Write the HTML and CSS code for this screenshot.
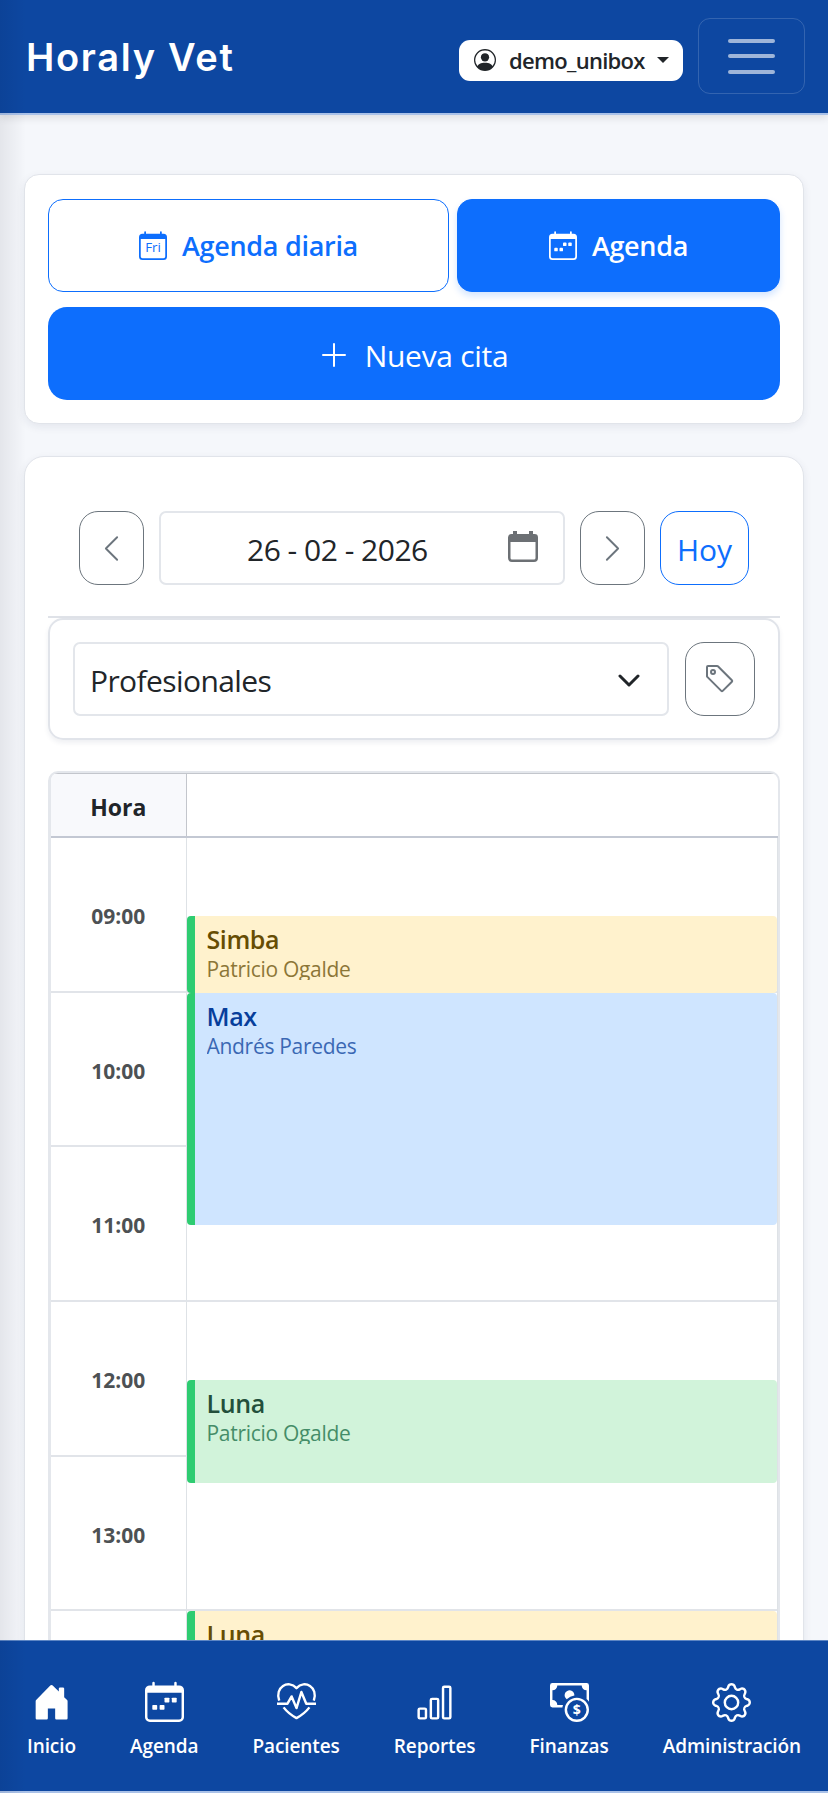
FILE: index.html
```html
<!DOCTYPE html>
<html lang="es">
<head>
    <meta charset="UTF-8">
    <meta name="viewport" content="width=device-width, initial-scale=1.0">
    <title>Horaly Vet - Agenda</title>
    <link rel="stylesheet" href="styles.css">
</head>
<body>
    <header class="navbar">
        <h1 class="brand">Horaly Vet</h1>
        <button class="user-btn">
            <svg class="icon-user" viewBox="0 0 16 16"><path d="M11 6a3 3 0 1 1-6 0 3 3 0 0 1 6 0"/><path fill-rule="evenodd" d="M0 8a8 8 0 1 1 16 0A8 8 0 0 1 0 8m8-7a7 7 0 0 0-5.468 11.37C3.242 11.226 4.805 10 8 10s4.757 1.225 5.468 2.37A7 7 0 0 0 8 1"/></svg>
            <span class="user-name">demo_unibox</span>
            <span class="caret"></span>
        </button>
        <button class="toggler" aria-label="Menú">
            <span></span>
            <span></span>
            <span></span>
        </button>
    </header>

    <main>
        <section class="card actions">
            <div class="tabs">
                <button class="btn tab tab-daily">
                    <svg class="icon-tab" viewBox="0 0 16 16"><path d="M4 0a.5.5 0 0 0-1 0v1H2a2 2 0 0 0-2 2v11a2 2 0 0 0 2 2h12a2 2 0 0 0 2-2V3a2 2 0 0 0-2-2h-1V0a.5.5 0 0 0-1 0v1H4zM1 4h14v10a1 1 0 0 1-1 1H2a1 1 0 0 1-1-1z"/><text class="icon-text" x="8" y="11.6" font-size="7.6">Fri</text></svg>
                    <span>Agenda diaria</span>
                </button>
                <button class="btn tab tab-active">
                    <svg class="icon-tab" viewBox="0 0 16 16"><path d="M4 0a.5.5 0 0 0-1 0v1H2a2 2 0 0 0-2 2v11a2 2 0 0 0 2 2h12a2 2 0 0 0 2-2V3a2 2 0 0 0-2-2h-1V0a.5.5 0 0 0-1 0v1H4zM1 4h14v10a1 1 0 0 1-1 1H2a1 1 0 0 1-1-1z"/><rect x="3" y="9" width="2" height="2" rx=".5"/><rect x="6" y="9" width="2" height="2" rx=".5"/><rect x="8" y="6" width="2" height="2" rx=".5"/><rect x="11" y="6" width="2" height="2" rx=".5"/></svg>
                    <span>Agenda</span>
                </button>
            </div>
            <button class="btn btn-new">
                <svg class="icon-plus" viewBox="0 0 24 24"><path d="M12 1v22M1 12h22"/></svg>
                <span>Nueva cita</span>
            </button>
        </section>

        <section class="card agenda">
            <div class="date-row">
                <button class="btn btn-gray"><svg class="icon-chevron" viewBox="0 0 16 28"><path d="M14 2 2 14l12 12"/></svg></button>
                <div class="date-input">
                    <span class="date-value">26 - 02 - 2026</span>
                    <svg class="icon-date" viewBox="0 0 30 31"><path fill-rule="evenodd" d="M5 0h4v3h12V0h4v3h1.500a3.500 3.500 0 0 1 3.500 3.500V27a4 4 0 0 1-4 4H4a4 4 0 0 1-4-4V6.500A3.500 3.500 0 0 1 3.500 3H5zM2.500 11v16a1.500 1.500 0 0 0 1.500 1.500h22a1.500 1.500 0 0 0 1.500-1.500V11z"/></svg>
                </div>
                <button class="btn btn-gray"><svg class="icon-chevron" viewBox="0 0 16 28"><path d="m2 2 12 12L2 26"/></svg></button>
                <button class="btn btn-today">Hoy</button>
            </div>

            <div class="filters">
                <div class="select">
                    <span>Profesionales</span>
                    <svg class="icon-select" viewBox="0 0 22 13"><path d="m2 2 9 9 9-9"/></svg>
                </div>
                <button class="btn btn-gray btn-tag">
                    <svg class="icon-tag" viewBox="0 0 16 16"><path d="M6 4.500a1.500 1.500 0 1 1-3 0 1.500 1.500 0 0 1 3 0m-1 0a.5.5 0 1 0-1 0 .5.5 0 0 0 1 0"/><path d="M2 1h4.586a1 1 0 0 1 .707.293l7 7a1 1 0 0 1 0 1.414l-4.586 4.586a1 1 0 0 1-1.414 0l-7-7A1 1 0 0 1 1 6.586V2a1 1 0 0 1 1-1m0 5.586 7 7L13.586 9l-7-7H2z"/></svg>
                </button>
            </div>

            <div class="schedule">
                <div class="head">
                    <div class="head-hour">Hora</div>
                    <div></div>
                </div>
                <div class="body">
                    <div class="hours">
                        <div class="hour">09:00</div>
                        <div class="hour">10:00</div>
                        <div class="hour">11:00</div>
                        <div class="hour">12:00</div>
                        <div class="hour">13:00</div>
                        <div class="hour"></div>
                    </div>
                    <div class="slots">
                        <div class="slot"><article class="event yellow half"><h3>Simba</h3><p>Patricio Ogalde</p></article></div>
                        <div class="slot"><article class="event blue"><h3>Max</h3><p>Andrés Paredes</p></article></div>
                        <div class="slot"></div>
                        <div class="slot"><article class="event green half"><h3>Luna</h3><p>Patricio Ogalde</p></article></div>
                        <div class="slot"></div>
                        <div class="slot"><article class="event yellow"><h3>Luna</h3></article></div>
                    </div>
                </div>
            </div>
        </section>
    </main>

    <nav class="bottom-nav">
        <a class="nav-item">
            <svg viewBox="0 0 16 16"><path d="M7.300 1.200a1 1 0 0 1 1.400 0L11 3.500V2.300a.5.5 0 0 1 .5-.5h1.200a.5.5 0 0 1 .5.5v3.500l1.200 1.200q.2.200.2.500V14.500a.5.5 0 0 1-.5.5H10a.5.5 0 0 1-.5-.5V10.500h-3v4a.5.5 0 0 1-.5.5H2a.5.5 0 0 1-.5-.5V7.500q0-.3.200-.5z"/></svg>
            <span>Inicio</span>
        </a>
        <a class="nav-item">
            <svg viewBox="0 0 16 16"><path d="M4 0a.5.5 0 0 0-1 0v1H2a2 2 0 0 0-2 2v11a2 2 0 0 0 2 2h12a2 2 0 0 0 2-2V3a2 2 0 0 0-2-2h-1V0a.5.5 0 0 0-1 0v1H4zM1 4h14v10a1 1 0 0 1-1 1H2a1 1 0 0 1-1-1z"/><rect x="3" y="9" width="2" height="2" rx=".3"/><rect x="6" y="9" width="2" height="2" rx=".3"/><rect x="8" y="6" width="2" height="2" rx=".3"/><rect x="11" y="6" width="2" height="2" rx=".3"/></svg>
            <span>Agenda</span>
        </a>
        <a class="nav-item">
            <svg class="line" viewBox="0 0 16 16"><path d="M.9 7.200C-1 1.800 4.600-1.600 8 2.100c3.400-3.700 9 -.3 7.100 5.100M2.700 10C4 11.700 5.800 13.200 8 14.400c2.200-1.200 4-2.700 5.300-4.400"/><path d="M0 8.500h4.300L6 5.500l2 4.800 2-6.600 2 4.800h4"/></svg>
            <span>Pacientes</span>
        </a>
        <a class="nav-item">
            <svg class="line" viewBox="0 0 16 16"><rect x="1.500" y="10.500" width="3" height="4" rx=".5"/><rect x="6.500" y="6.500" width="3" height="8" rx=".5"/><rect x="11.500" y="1.500" width="3" height="13" rx=".5"/></svg>
            <span>Reportes</span>
        </a>
        <a class="nav-item">
            <svg viewBox="0 0 16 16"><path fill-rule="evenodd" d="M11 15a4 4 0 1 0 0-8 4 4 0 0 0 0 8m5-4a5 5 0 1 1-10 0 5 5 0 0 1 10 0"/><path d="M1 0a1 1 0 0 0-1 1v8a1 1 0 0 0 1 1h4.083q.088-.517.258-1H3a2 2 0 0 0-2-2V3a2 2 0 0 0 2-2h10a2 2 0 0 0 2 2v3.528c.38.34.717.728 1 1.154V1a1 1 0 0 0-1-1z"/><path d="M9.998 5.083 10 5a2 2 0 1 0-3.132 1.650 6 6 0 0 1 3.130-1.567"/><text class="icon-text coin" x="11" y="13.100" font-size="5.800">$</text></svg>
            <span>Finanzas</span>
        </a>
        <a class="nav-item">
            <svg viewBox="0 0 16 16"><path d="M8 4.754a3.246 3.246 0 1 0 0 6.492 3.246 3.246 0 0 0 0-6.492M5.754 8a2.246 2.246 0 1 1 4.492 0 2.246 2.246 0 0 1-4.492 0"/><path d="M9.796 1.343c-.527-1.790-3.065-1.790-3.592 0l-.094.319a.873.873 0 0 1-1.255.52l-.292-.16c-1.640-.892-3.433.902-2.540 2.541l.159.292a.873.873 0 0 1-.52 1.255l-.319.094c-1.790.527-1.790 3.065 0 3.592l.319.094a.873.873 0 0 1 .52 1.255l-.16.292c-.892 1.640.901 3.434 2.541 2.540l.292-.159a.873.873 0 0 1 1.255.52l.094.319c.527 1.790 3.065 1.790 3.592 0l.094-.319a.873.873 0 0 1 1.255-.52l.292.16c1.640.893 3.434-.902 2.540-2.541l-.159-.292a.873.873 0 0 1 .52-1.255l.319-.094c1.790-.527 1.790-3.065 0-3.592l-.319-.094a.873.873 0 0 1-.52-1.255l.16-.292c.893-1.640-.902-3.433-2.541-2.540l-.292.159a.873.873 0 0 1-1.255-.52zm-2.633.283c.246-.835 1.428-.835 1.674 0l.094.319a1.873 1.873 0 0 0 2.693 1.115l.291-.16c.764-.415 1.600.42 1.184 1.185l-.159.292a1.873 1.873 0 0 0 1.116 2.692l.318.094c.835.246.835 1.428 0 1.674l-.319.094a1.873 1.873 0 0 0-1.115 2.693l.16.291c.415.764-.42 1.600-1.185 1.184l-.291-.159a1.873 1.873 0 0 0-2.693 1.116l-.094.318c-.246.835-1.428.835-1.674 0l-.094-.319a1.873 1.873 0 0 0-2.692-1.115l-.292.16c-.764.415-1.600-.42-1.184-1.185l.159-.291A1.873 1.873 0 0 0 1.945 8.930l-.319-.094c-.835-.246-.835-1.428 0-1.674l.319-.094A1.873 1.873 0 0 0 3.060 4.377l-.16-.292c-.415-.764.42-1.600 1.185-1.184l.292.159a1.873 1.873 0 0 0 2.692-1.115z"/></svg>
            <span>Administración</span>
        </a>
    </nav>
    <div class="edge-shadow"></div>
</body>
</html>
```
FILE: styles.css
```css
* {
    box-sizing: border-box;
}
body {
    font-family: "Open Sans", "Noto Sans", sans-serif;
    color: #212529;
    margin: 0;
    height: 1793px;
    overflow: hidden;
    display: flex;
    flex-direction: column;
    background-color: #f5f7fb;
}
button {
    font-family: inherit;
    margin: 0;
    padding: 0;
    background: none;
    border: none;
}
svg {
    display: block;
    flex: none;
    fill: currentColor;
}
h1, h3, p {
    margin: 0;
}

/* Barra superior */
.navbar {
    display: flex;
    align-items: center;
    flex: none;
    height: 115px;
    padding: 0 23px 1px 26px;
    background-color: #0d47a1;
    border-bottom: 2px solid #a9c1e8;
    box-shadow: 0 3px 8px rgba(0,0,0,0.1);
    z-index: 1;
}
.brand {
    color: white;
    font-family: Inter, sans-serif;
    font-weight: 600;
    font-size: 38px;
    letter-spacing: 1.7px;
    line-height: 50px;
    margin-right: auto;
    padding-top: 2px;
}
.user-btn {
    display: flex;
    align-items: center;
    width: 224px;
    height: 41px;
    margin-top: 8px;
    margin-right: 15px;
    padding-left: 15px;
    color: #212529;
    background-color: white;
    border-radius: 11px;
}
.icon-user {
    width: 22px;
    height: 22px;
    margin-right: 13px;
}
.user-name {
    font-size: 22px;
    font-weight: 600;
    letter-spacing: -0.7px;
    line-height: 30px;
}
.caret {
    border: 6px solid transparent;
    border-top-color: #212529;
    border-bottom: none;
    margin-left: 12px;
}
.toggler {
    display: flex;
    flex-direction: column;
    align-items: center;
    justify-content: center;
    gap: 11.500px;
    width: 107px;
    height: 76px;
    border: 1px solid rgba(255,255,255,0.16);
    border-radius: 12px;
}
.toggler span {
    width: 47px;
    height: 4px;
    border-radius: 2px;
    background-color: #9eb5d9;
}

/* Tarjetas */
main {
    flex: 1;
    min-height: 0;
    overflow: hidden;
    padding: 59px 24px 0;
}
.card {
    background-color: white;
    border: 1px solid #e1e4ea;
    box-shadow: 0 3px 8px rgba(30,40,80,0.08);
}
.actions {
    height: 250px;
    padding: 24px 23px;
    border-radius: 15px;
    margin-bottom: 32px;
}
.tabs {
    display: flex;
    gap: 8px;
    margin-bottom: 15px;
}
.btn {
    display: flex;
    align-items: center;
    justify-content: center;
}
.tab {
    height: 93px;
    border: 1.500px solid #0d6efd;
    border-radius: 15px;
    font-size: 27px;
    font-weight: 600;
    letter-spacing: -0.3px;
    gap: 15px;
}
.tab-daily {
    width: 401px;
    color: #0d6efd;
}
.tab-active {
    width: 323px;
    color: white;
    background-color: #0d6efd;
    box-shadow: 0 4px 7px rgba(13,110,253,0.18);
}
.icon-tab {
    width: 28px;
    height: 28px;
    overflow: visible;
}
.icon-text {
    text-anchor: middle;
    font-weight: 400;
    letter-spacing: 0;
}
.coin {
    font-weight: 700;
}
.btn-new {
    width: 100%;
    height: 93px;
    border-radius: 19px;
    background-color: #0d6efd;
    color: white;
    font-size: 30px;
    letter-spacing: -0.3px;
    gap: 19px;
    padding: 3px 0 0 2px;
}
.icon-plus {
    width: 24px;
    height: 24px;
}
.icon-plus path, .icon-chevron path, .icon-select path {
    fill: none;
    stroke: currentColor;
    stroke-width: 2;
    stroke-linecap: round;
    stroke-linejoin: round;
}
.agenda {
    height: 1500px;
    padding: 54px 23px 0;
    border-radius: 20px;
}

/* Selector de fecha */
.date-row {
    display: flex;
    gap: 15px;
    padding: 0 31px 31px;
    border-bottom: 2px solid #dfe2e8;
}
.btn-gray {
    width: 65px;
    height: 74px;
    flex: none;
    color: #6c757d;
    border: 1.500px solid #6c757d;
    border-radius: 19px;
}
.icon-chevron {
    width: 15px;
    height: 27px;
}
.date-input {
    flex: 1;
    display: flex;
    align-items: center;
    justify-content: space-between;
    padding: 0 25px 0 86px;
    border: 2px solid #e3e6eb;
    border-radius: 7px;
    font-size: 30px;
}
.date-value {
    white-space: pre;
    letter-spacing: -0.5px;
    padding-top: 2px;
}
.icon-date {
    width: 30px;
    height: 31px;
    color: #6c7074;
    margin-bottom: 4px;
}
.btn-today {
    width: 89px;
    height: 74px;
    color: #0d6efd;
    border: 1.500px solid #0d6efd;
    border-radius: 19px;
    font-size: 30px;
    padding-top: 2px;
}

/* Filtros */
.filters {
    display: flex;
    gap: 16px;
    height: 122px;
    padding: 22px 23px;
    border: 2px solid #e1e4ea;
    border-radius: 15px;
    box-shadow: 0 3px 5px rgba(30,40,80,0.07);
    margin-bottom: 31px;
}
.select {
    flex: 1;
    display: flex;
    align-items: center;
    justify-content: space-between;
    padding: 2px 27px 0 15px;
    border: 2px solid #e3e6eb;
    border-radius: 7px;
    font-size: 30px;
    letter-spacing: -0.6px;
}
.icon-select {
    width: 22px;
    height: 13px;
}
.icon-select path {
    stroke-width: 3;
}
.btn-tag {
    width: 70px;
}
.icon-tag {
    width: 32px;
    height: 32px;
}

/* Agenda por horas */
.schedule {
    border: 2px solid #e4e7ec;
    border-left-width: 3px;
    border-radius: 10px 10px 0 0;
    overflow: hidden;
}
.head, .body {
    display: grid;
    grid-template-columns: 135.500px 1fr;
}
.head {
    height: 65px;
    border-top: 1px solid #c3c6cc;
    border-bottom: 2px solid #c3c8d3;
}
.head-hour {
    display: flex;
    align-items: center;
    justify-content: center;
    background-color: #f8f9fc;
    border-right: 1px solid #c3c6cc;
    font-size: 23px;
    font-weight: 700;
    padding-top: 3px;
}
.hour, .slot {
    height: 154.700px;
    border-bottom: 2px solid #e1e4e9;
}
.hour {
    display: flex;
    align-items: center;
    justify-content: center;
    border-right: 1px solid #dee2e6;
    color: #4d5154;
    font-size: 21px;
    font-weight: 700;
    letter-spacing: 0;
    padding-top: 3px;
}
.slots {
    border-right: 1px solid #dee2e6;
}
.event {
    position: relative;
    height: 77px;
    padding: 5px 12px 0;
    border-left: 8px solid #2ecc71;
    border-radius: 4px;
}
.event h3 {
    font-size: 25px;
    font-weight: 600;
    letter-spacing: -0.4px;
    line-height: 36px;
}
.event p {
    height: 23px;
    overflow: hidden;
    font-size: 21px;
    letter-spacing: -0.3px;
    line-height: 25px;
    opacity: 0.75;
}
.half {
    top: 77.500px;
}
.yellow {
    background-color: #fff2cd;
    color: #664d03;
}
.blue {
    height: 232px;
    background-color: #cfe5ff;
    color: #073e9b;
}
.green {
    height: 103px;
    background-color: #d1f3da;
    color: #234f3b;
}
.green p {
    color: #146c43;
}

/* Menú inferior */
.bottom-nav {
    display: flex;
    justify-content: space-between;
    flex: none;
    height: 153px;
    padding: 42px 27px 0;
    color: white;
    background-color: #0d47a1;
    border-top: 1px solid #5d86c4;
    border-bottom: 2px solid #a9c1e8;
}
.nav-item {
    display: flex;
    flex-direction: column;
    align-items: center;
    font-size: 19px;
    font-weight: 600;
    letter-spacing: -0.1px;
    line-height: 28px;
    gap: 10px;
}
.nav-item svg {
    width: 39px;
    height: 39px;
    overflow: visible;
}
.line path, .line rect {
    fill: none;
    stroke: currentColor;
    stroke-linejoin: round;
}
.edge-shadow {
    position: absolute;
    top: 0;
    left: 0;
    width: 26px;
    height: 1793px;
    background: linear-gradient(to right, rgba(0,0,20,0.07), transparent);
    z-index: 2;
}
```
